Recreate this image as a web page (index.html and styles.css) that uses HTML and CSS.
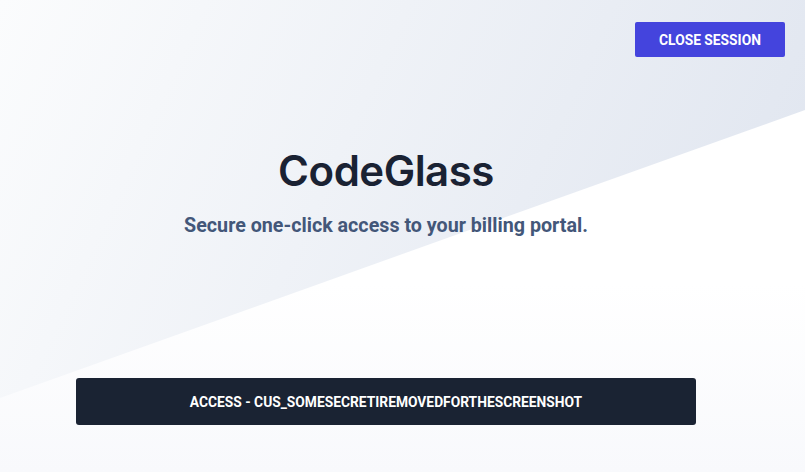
FILE: index.html
```html
<!DOCTYPE html>
<html lang="en">
<head>
<meta charset="utf-8">
<title>CodeGlass</title>
<link rel="stylesheet" href="styles.css">
</head>
<body>
<div class="page">
  <header class="topbar">
    <button class="btn-close">Close Session</button>
  </header>
  <main class="content">
    <h1 class="title">CodeGlass</h1>
    <p class="subtitle">Secure one-click access to your billing portal.</p>
    <button class="btn-access">Access - cus_SomeSecretIRemovedForTheScreenshot</button>
  </main>
</div>
</body>
</html>
```
FILE: styles.css
```css
* { box-sizing: border-box; }
html, body { margin: 0; padding: 0; }
body {
  width: 805px;
  height: 472px;
  overflow: hidden;
  font-family: Roboto, "Liberation Sans", sans-serif;
}
.page {
  position: relative;
  height: 472px;
  background: linear-gradient(115deg, #fbfcfd 0%, #eff2f7 40%, #dde3ee 100%);
  z-index: 0;
}
.page::before {
  content: "";
  position: absolute;
  inset: 0;
  z-index: -1;
  clip-path: polygon(100% 110px, 100% 100%, 0 100%, 0 398px);
  background: linear-gradient(to bottom, #ffffff 60%, #f8f9fc 100%);
}
.topbar {
  display: flex;
  justify-content: flex-end;
  padding: 22px 20px 0 0;
}
.btn-close {
  width: 150px;
  height: 35px;
  border: 0;
  border-radius: 2px;
  background: #4444dd;
  color: #fff;
  font-family: Roboto, "Liberation Sans", sans-serif;
  font-weight: 700;
  font-size: 13.8px;
  text-transform: uppercase;
  letter-spacing: 0;
}
.content {
  width: 620px;
  margin-left: 76px;
  display: flex;
  flex-direction: column;
  align-items: center;
}
.title {
  margin: 88px 0 0;
  font-family: Inter, "Open Sans", sans-serif;
  font-weight: 600;
  font-size: 42px;
  line-height: 52px;
  color: #1a2233;
  letter-spacing: -0.5px;
}
.subtitle {
  margin: 16px 0 0;
  font-weight: 700;
  font-size: 19.7px;
  line-height: 26px;
  color: #435779;
}
.btn-access {
  margin-top: 139px;
  width: 620px;
  height: 47px;
  border: 0;
  border-radius: 3px;
  background: #1a2333;
  color: #fff;
  font-family: Roboto, "Liberation Sans", sans-serif;
  font-weight: 700;
  font-size: 13.8px;
  text-transform: uppercase;
}
```
